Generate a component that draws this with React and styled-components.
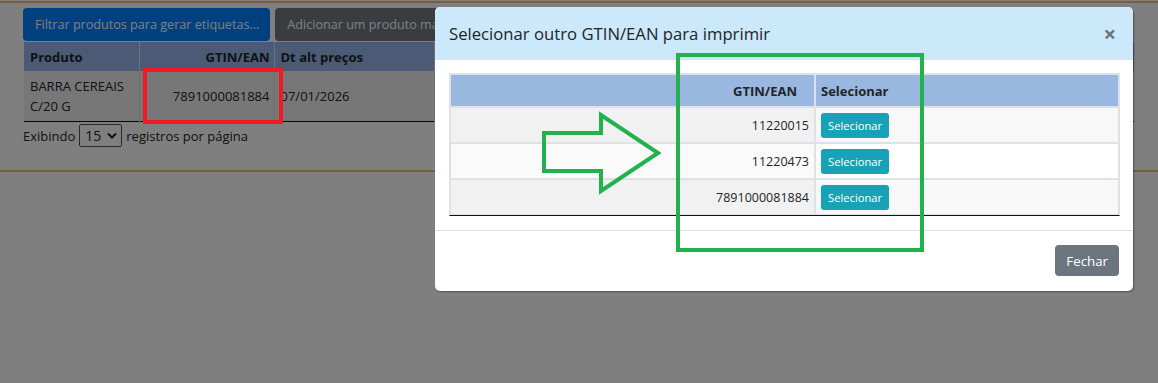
import React from "react";
import styled, { createGlobalStyle } from "styled-components";

const GlobalStyle = createGlobalStyle`
  html, body {
    margin: 0;
    padding: 0;
  }
  body {
    font-family: "Open Sans", "Noto Sans", sans-serif;
    color: #212529;
    background: #fff;
    overflow: hidden;
  }
`;

const Page = styled.div`
  position: relative;
  width: 1158px;
  height: 383px;
  overflow: hidden;
  background: #fff;
`;

const Rule = styled.div`
  height: 2px;
  margin-top: ${(p) => p.$top || 0}px;
  background: #fdbd71;
`;

const Content = styled.div`
  height: 167px;
  padding: 5px 24px 0 23px;
  box-sizing: border-box;
`;

const Toolbar = styled.div`
  display: flex;
  gap: 5px;
`;

const PageButton = styled.button`
  height: 33px;
  padding: 0 11px 0 12px;
  border: none;
  border-radius: 4px;
  font-family: inherit;
  font-size: 12.6px;
  color: #fff;
  background: ${(p) => (p.$dark ? "#737880" : "#0080ff")};
  white-space: nowrap;
`;

const ListTable = styled.table`
  width: 1110px;
  margin: 1px 0 0 1px;
  table-layout: fixed;
  border-collapse: collapse;
  border-bottom: 1px solid #111;
  font-size: 13px;

  th {
    height: 29px;
    padding: 0 6px;
    background: #97b5ea;
    border-left: 1px solid #dfe5f0;
    font-weight: 700;
    text-align: left;
    box-sizing: border-box;
  }
  th:first-child {
    border-left: none;
  }
  td {
    height: 50px;
    padding: 0 6px;
    background: #efefef;
    border-left: 1px solid #dcdcdc;
    line-height: 20px;
  }
  td:first-child {
    border-left: none;
  }
`;

const Cell = styled.td`
  text-align: ${(p) => p.$align || "left"};
  padding-right: ${(p) => (p.$align === "right" ? "4px" : "6px")} !important;
`;

const Head = styled.th`
  width: ${(p) => (p.$w ? `${p.$w}px` : "auto")};
  text-align: ${(p) => p.$align || "left"} !important;
  padding-right: ${(p) => (p.$align === "right" ? "4px" : "6px")} !important;
`;

const Pager = styled.div`
  display: flex;
  align-items: center;
  gap: 4px;
  margin-top: 2px;
  font-size: 13px;
`;

const Select = styled.div`
  display: flex;
  align-items: center;
  justify-content: space-between;
  width: 43px;
  height: 23px;
  box-sizing: border-box;
  padding: 0 4px 0 5px;
  border: 1px solid #555;
  border-radius: 2px;
  font-size: 14px;
`;

const Backdrop = styled.div`
  position: absolute;
  inset: 0;
  background: rgba(0, 0, 0, 0.5);
`;

const Modal = styled.div`
  position: absolute;
  left: 435px;
  top: 7px;
  width: 698px;
  background: #fff;
  border-radius: 5px;
  box-shadow: 1px 1px 2px rgba(0, 0, 0, 0.35);
  overflow: hidden;
`;

const ModalHeader = styled.div`
  display: flex;
  align-items: center;
  justify-content: space-between;
  height: 53px;
  box-sizing: border-box;
  padding: 0 17px 0 14px;
  background: #cce8fb;
  border-bottom: 1px solid #dee2e6;
`;

const Title = styled.h5`
  margin: 0;
  font-size: 16.7px;
  font-weight: 400;
  color: #212529;
`;

const Close = styled.span`
  font-size: 22px;
  font-weight: 700;
  line-height: 1;
  color: #000;
  opacity: 0.5;
`;

const ModalBody = styled.div`
  padding: 13px 13px 14px 14px;
`;

const PickTable = styled.table`
  width: 671px;
  border-collapse: separate;
  border-spacing: 0;
  border: 1px solid #dee2e6;
  border-bottom: 1px solid #111;
  font-size: 12.5px;

  th {
    height: 33px;
    box-sizing: border-box;
    padding: 4px 5px;
    background: #9ab7df;
    border: 1px solid #dee2e6;
    font-weight: 700;
    font-size: 13px;
    text-align: left;
  }
  td {
    height: 36px;
    box-sizing: border-box;
    padding: 4px 5px;
    border: 1px solid #dee2e6;
  }
`;

const CodeCell = styled.td`
  width: 365px;
  text-align: right;
  background: ${(p) => (p.$odd ? "#f1f1f1" : "#fafafa")};
`;

const ActionCell = styled.td`
  background: ${(p) => (p.$odd ? "#f8f8f8" : "#fff")};
`;

const CodeHead = styled.th`
  width: 365px;
  text-align: right !important;
  padding-right: 17px !important;
`;

const InfoButton = styled.button`
  height: 25px;
  padding: 0 7px;
  border: none;
  border-radius: 3px;
  background: #17a2b8;
  color: #fff;
  font-family: inherit;
  font-size: 11.2px;
`;

const ModalFooter = styled.div`
  display: flex;
  justify-content: flex-end;
  padding: 14px 14px 15px;
  border-top: 1px solid #dee2e6;
`;

const CloseButton = styled.button`
  height: 31px;
  padding: 0 11px;
  border: none;
  border-radius: 4px;
  background: #6c757d;
  color: #fff;
  font-family: inherit;
  font-size: 13.3px;
`;

const Mark = styled.div`
  position: absolute;
  left: ${(p) => p.$x}px;
  top: ${(p) => p.$y}px;
  width: ${(p) => p.$w}px;
  height: ${(p) => p.$h}px;
  box-sizing: border-box;
  border: 4px solid ${(p) => p.$color};
`;

const Arrow = styled.svg`
  position: absolute;
  left: 540px;
  top: 111px;
`;

const codes = ["11220015", "11220473", "7891000081884"];

export default function App() {
  return (
    <Page>
      <GlobalStyle />
      <Rule $top={1} />
      <Content>
        <Toolbar>
          <PageButton>Filtrar produtos para gerar etiquetas...</PageButton>
          <PageButton $dark>Adicionar um produto manualmente</PageButton>
        </Toolbar>
        <ListTable>
          <thead>
            <tr>
              <Head $w={115}>Produto</Head>
              <Head $w={135} $align="right">GTIN/EAN</Head>
              <Head $w={160}>Dt alt preços</Head>
              <Head>Preço</Head>
            </tr>
          </thead>
          <tbody>
            <tr>
              <Cell>BARRA CEREAIS<br />C/20 G</Cell>
              <Cell $align="right">7891000081884</Cell>
              <Cell>07/01/2026</Cell>
              <Cell>4,99</Cell>
            </tr>
          </tbody>
        </ListTable>
        <Pager>
          Exibindo
          <Select>
            15
            <svg width="10" height="7" viewBox="0 0 10 7">
              <path d="M1 1.5 L5 5.5 L9 1.5" fill="none" stroke="#222" strokeWidth="2" />
            </svg>
          </Select>
          registros por página
        </Pager>
      </Content>
      <Rule />

      <Backdrop />

      <Modal>
        <ModalHeader>
          <Title>Selecionar outro GTIN/EAN para imprimir</Title>
          <Close>×</Close>
        </ModalHeader>
        <ModalBody>
          <PickTable>
            <thead>
              <tr>
                <CodeHead>GTIN/EAN</CodeHead>
                <th>Selecionar</th>
              </tr>
            </thead>
            <tbody>
              {codes.map((code, i) => (
                <tr key={code}>
                  <CodeCell $odd={i % 2 === 0}>{code}</CodeCell>
                  <ActionCell $odd={i % 2 === 0}>
                    <InfoButton>Selecionar</InfoButton>
                  </ActionCell>
                </tr>
              ))}
            </tbody>
          </PickTable>
        </ModalBody>
        <ModalFooter>
          <CloseButton>Fechar</CloseButton>
        </ModalFooter>
      </Modal>

      <Mark $x={143} $y={68} $w={140} $h={56} $color="#ed1c24" />
      <Mark $x={676} $y={53} $w={248} $h={199} $color="#22b14c" />
      <Arrow width="124" height="84" viewBox="0 0 124 84">
        <polygon
          points="4,22 61,22 61,4 118,42 61,80 61,60 4,60"
          fill="none"
          stroke="#22b14c"
          strokeWidth="4"
        />
      </Arrow>
    </Page>
  );
}
